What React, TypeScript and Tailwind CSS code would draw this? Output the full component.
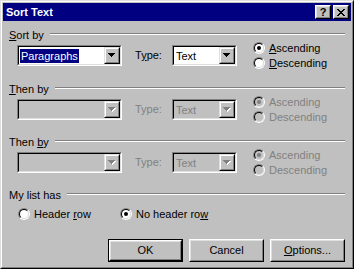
import React from "react";

function Arrow({ disabled }: { disabled?: boolean }) {
  return (
    <svg width="8" height="5" viewBox="0 0 8 5" shapeRendering="crispEdges">
      {disabled && (
        <path d="M1 1h7v1H1z M2 2h5v1H2z M3 3h3v1H3z M4 4h1v1H4z" fill="#fff" />
      )}
      <path
        d="M0 0h7v1H0z M1 1h5v1H1z M2 2h3v1H2z M3 3h1v1H3z"
        fill={disabled ? "#808080" : "#000"}
      />
    </svg>
  );
}

function Combo({
  width,
  text,
  selected,
  disabled,
}: {
  width: string;
  text?: string;
  selected?: boolean;
  disabled?: boolean;
}) {
  return (
    <div
      className={`${width} h-[21px] border border-t-[#808080] border-l-[#808080] border-b-white border-r-white`}
    >
      <div
        className={`h-full flex border border-t-black border-l-black border-b-[#dfdfdf] border-r-[#dfdfdf] ${
          disabled ? "bg-[#c0c0c0]" : "bg-white"
        }`}
      >
        <div className="flex-1 flex items-center pl-[1px] overflow-hidden">
          {text && (
            <span
              className={`leading-[14px] px-[1px] ${
                selected
                  ? "bg-[#000080] text-white"
                  : disabled
                  ? "text-[#808080]"
                  : "text-black"
              }`}
            >
              {text}
            </span>
          )}
        </div>
        <div className="w-[16px] h-full border border-t-[#dfdfdf] border-l-[#dfdfdf] border-b-black border-r-black">
          <div className="w-full h-full bg-[#c0c0c0] border border-t-white border-l-white border-b-[#808080] border-r-[#808080] flex items-center justify-center">
            <Arrow disabled={disabled} />
          </div>
        </div>
      </div>
    </div>
  );
}

function Radio({ checked, disabled }: { checked?: boolean; disabled?: boolean }) {
  return (
    <div className="w-[12px] h-[12px] shrink-0 rounded-full border border-t-[#808080] border-l-[#808080] border-b-white border-r-white">
      <div
        className={`w-full h-full rounded-full border border-t-black border-l-black border-b-[#dfdfdf] border-r-[#dfdfdf] flex items-center justify-center ${
          disabled ? "bg-[#c0c0c0]" : "bg-white"
        }`}
      >
        {checked && (
          <div
            className={`w-[4px] h-[4px] rounded-full ${
              disabled ? "bg-[#808080]" : "bg-black"
            }`}
          />
        )}
      </div>
    </div>
  );
}

function RadioRow({
  checked,
  disabled,
  children,
}: {
  checked?: boolean;
  disabled?: boolean;
  children: React.ReactNode;
}) {
  return (
    <div className="h-[14px] flex items-center gap-[4px]">
      <Radio checked={checked} disabled={disabled} />
      <span className={`leading-[13px] ${disabled ? "text-[#808080]" : "text-black"}`}>
        {children}
      </span>
    </div>
  );
}

function Heading({ children }: { children: React.ReactNode }) {
  return (
    <div className="flex items-start h-[13px] px-[6px]">
      <span className="leading-[13px]">{children}</span>
      <div className="flex-1 ml-[6px] mt-[4px] h-[2px] border-t border-t-[#808080] border-b border-b-white" />
    </div>
  );
}

function SortGroup({
  label,
  height,
  disabled,
}: {
  label: React.ReactNode;
  height: string;
  disabled?: boolean;
}) {
  return (
    <div className={`${height} flex flex-col`}>
      <Heading>{label}</Heading>
      <div className="flex items-start pl-[14px]">
        <div className="mt-[3px]">
          <Combo
            width="w-[105px]"
            text={disabled ? undefined : "Paragraphs"}
            selected={!disabled}
            disabled={disabled}
          />
        </div>
        <span
          className={`mt-[7px] ml-[13px] w-[37px] leading-[13px] ${
            disabled ? "text-[#808080]" : "text-black"
          }`}
        >
          {disabled ? "Type:" : (
            <>
              T<u>y</u>pe:
            </>
          )}
        </span>
        <div className="mt-[3px]">
          <Combo width="w-[65px]" text="Text" disabled={disabled} />
        </div>
        <div className="ml-[16px] mt-[-1px] flex flex-col gap-[1px]">
          <RadioRow checked disabled={disabled}>
            {disabled ? "Ascending" : (
              <>
                <u>A</u>scending
              </>
            )}
          </RadioRow>
          <RadioRow disabled={disabled}>
            {disabled ? "Descending" : (
              <>
                <u>D</u>escending
              </>
            )}
          </RadioRow>
        </div>
      </div>
    </div>
  );
}

function Button({
  children,
  isDefault,
}: {
  children: React.ReactNode;
  isDefault?: boolean;
}) {
  const inner = (
    <div className="w-full h-full border border-t-white border-l-white border-b-black border-r-black">
      <div className="w-full h-full border border-t-[#dfdfdf] border-l-[#dfdfdf] border-b-[#808080] border-r-[#808080] flex items-center justify-center leading-[13px]">
        {children}
      </div>
    </div>
  );
  return (
    <div
      className={`w-[75px] h-[23px] bg-[#c0c0c0] ${
        isDefault ? "border border-black" : ""
      }`}
    >
      {inner}
    </div>
  );
}

function TitleButton({ children }: { children: React.ReactNode }) {
  return (
    <div className="w-[16px] h-[14px] bg-[#c0c0c0] border border-t-white border-l-white border-b-black border-r-black">
      <div className="w-full h-full border border-t-[#dfdfdf] border-l-[#dfdfdf] border-b-[#808080] border-r-[#808080] flex items-center justify-center">
        {children}
      </div>
    </div>
  );
}

export default function App() {
  return (
    <div
      className="w-[354px] h-[269px] bg-[#c0c0c0] text-black text-[11px] border border-t-[#dfdfdf] border-l-[#dfdfdf] border-b-black border-r-black"
      style={{ fontFamily: '"Liberation Sans", Arial, sans-serif' }}
    >
      <div className="w-full h-full p-[1px] border border-t-white border-l-white border-b-[#808080] border-r-[#808080] flex flex-col">
        {/* title bar */}
        <div className="h-[18px] bg-[#000080] flex items-center pl-[3px] pr-[2px]">
          <span className="text-white font-bold text-[11px] leading-[13px] flex-1">
            Sort Text
          </span>
          <div className="flex gap-[2px]">
            <TitleButton>
              <span className="font-bold text-[11px] leading-[10px] text-black">?</span>
            </TitleButton>
            <TitleButton>
              <svg width="8" height="7" viewBox="0 0 8 7" shapeRendering="crispEdges">
                <path
                  d="M0 0h2v1H0z M6 0h2v1H6z M1 1h2v1H1z M5 1h2v1H5z M2 2h4v1H2z M3 3h2v1H3z M2 4h4v1H2z M1 5h2v1H1z M5 5h2v1H5z M0 6h2v1H0z M6 6h2v1H6z"
                  fill="#000"
                />
              </svg>
            </TitleButton>
          </div>
        </div>

        <div className="flex flex-col pt-[8px]">
          <SortGroup
            height="h-[54px]"
            label={
              <>
                <u>S</u>ort by
              </>
            }
          />
          <SortGroup
            height="h-[53px]"
            disabled
            label={
              <>
                <u>T</u>hen by
              </>
            }
          />
          <SortGroup
            height="h-[53px]"
            disabled
            label={
              <>
                Then <u>b</u>y
              </>
            }
          />

          <Heading>My list has</Heading>
          <div className="mt-[5px] flex pl-[15px]">
            <div className="w-[102px]">
              <RadioRow>
                Header <u>r</u>ow
              </RadioRow>
            </div>
            <RadioRow checked>
              No header ro<u>w</u>
            </RadioRow>
          </div>

          <div className="mt-[18px] flex justify-end gap-[6px] pr-[6px]">
            <Button isDefault>OK</Button>
            <Button>Cancel</Button>
            <Button>
              <span>
                <u>O</u>ptions...
              </span>
            </Button>
          </div>
        </div>
      </div>
    </div>
  );
}
